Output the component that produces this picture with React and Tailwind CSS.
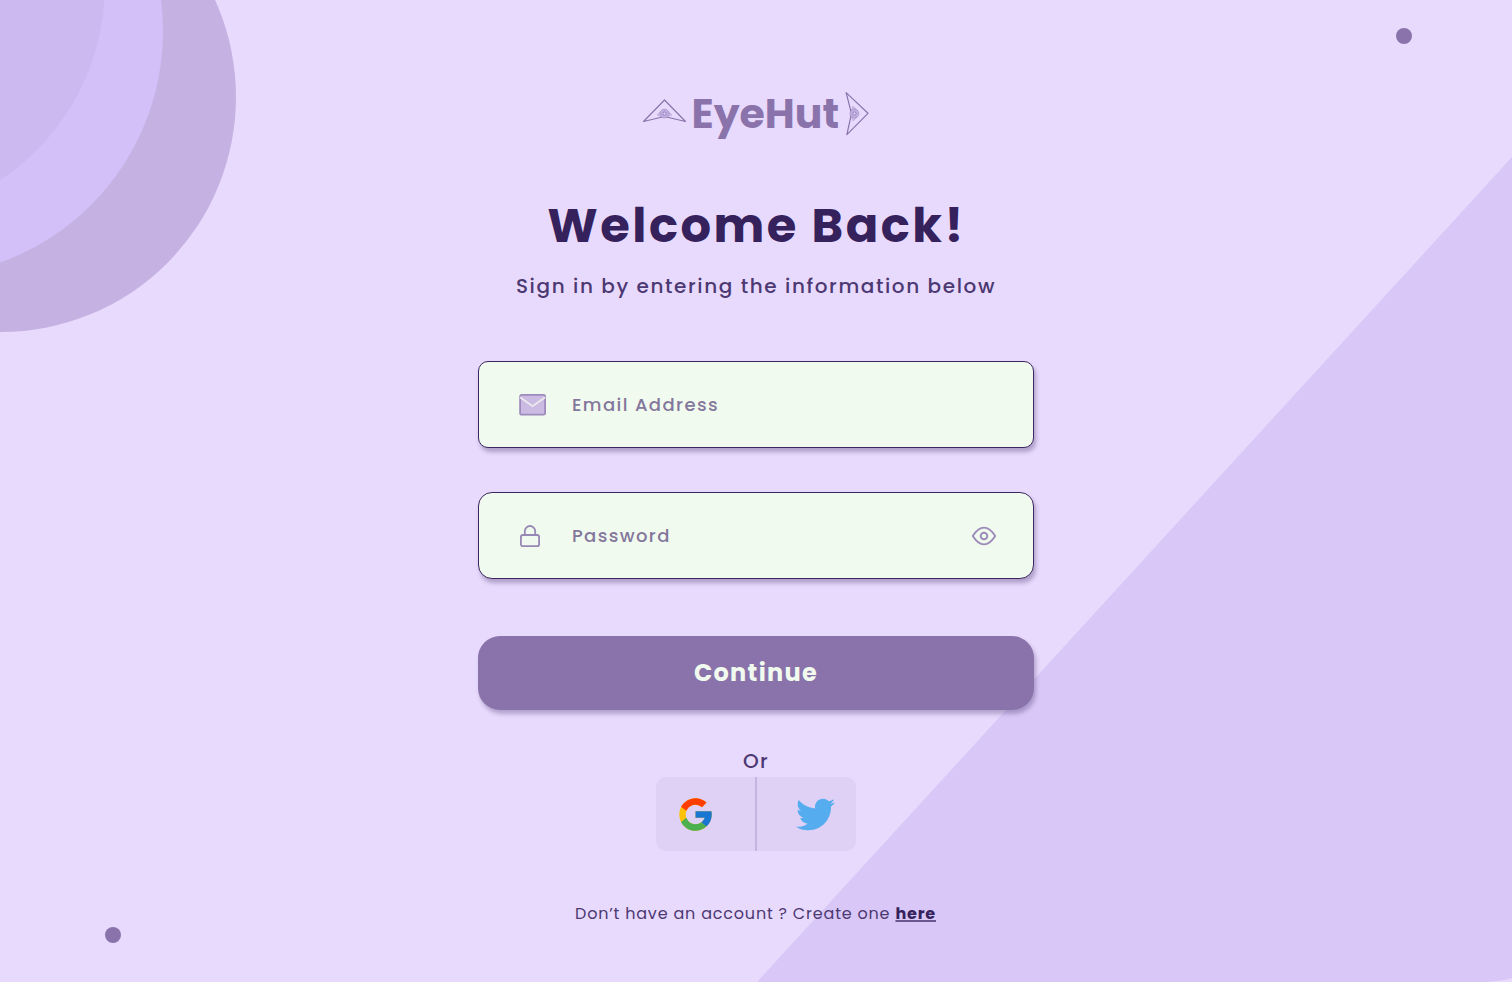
import { FcGoogle } from "react-icons/fc";
import { FaTwitter } from "react-icons/fa";

function Backdrop() {
  return (
    <svg className="absolute inset-0" width="1512" height="982" viewBox="0 0 1512 982" aria-hidden="true">
      <path d="M1512 157 757 982h755z" fill="#d9c8f7" />
      <path d="M1485 982q18-1 27-4v4z" fill="#e8dafd" />
      <circle cx="1" cy="97" r="235" fill="#c5b2e2" />
      <circle cx="-83" cy="31" r="246" fill="#d4c0f8" />
      <circle cx="-129" cy="-15" r="234" fill="#ccb9ef" />
      <circle cx="1404" cy="36" r="8" fill="#8a73ab" />
      <circle cx="113" cy="935" r="8" fill="#8a73ab" />
    </svg>
  );
}

function HutMark({ className }) {
  return (
    <svg className={className} width="44" height="24" viewBox="0 0 44 24" fill="none" stroke="#8a73ab">
      <path d="M1 22.5 22 1l21 21.5L22 17.5z" strokeWidth="1.2" strokeLinejoin="round" />
      <path d="M14.5 16q7.500-10 15 0-7.500 4-15 0z" fill="#cdbcea" strokeWidth=".5" strokeOpacity=".5" />
      <circle cx="22" cy="14.6" r="4.500" fill="#c1aee0" strokeWidth=".6" strokeOpacity=".6" />
      <circle cx="22" cy="14.6" r="1.700" fill="#d9c8f5" strokeWidth=".7" />
    </svg>
  );
}

function MailIcon() {
  return (
    <svg width="28" height="22" viewBox="0 0 28 22" fill="none">
      <rect x="1.1" y="0.9" width="25" height="19.800" rx="1.5" fill="#cbbbe2" stroke="#9e8bbd" strokeWidth="1.8" />
      <path d="M1 3.200 13.600 12.200 26.200 3.200" stroke="#ebe9ee" strokeWidth="1.8" />
    </svg>
  );
}

function LockIcon() {
  return (
    <svg width="22" height="24" viewBox="0 0 22 24" fill="none" stroke="#9888b5" strokeWidth="1.8">
      <rect x="1.9" y="11" width="18.2" height="11.2" rx="2" />
      <path d="M5.800 11V7.200a5.200 5.200 0 0 1 10.400 0V11" />
    </svg>
  );
}

function EyeIcon() {
  return (
    <svg width="26" height="20" viewBox="0 0 26 20" fill="none" stroke="#9b8bb9" strokeWidth="1.9">
      <path d="M1.800 10Q7 1.600 13 1.600T24.200 10Q19 18.400 13 18.400T1.800 10z" strokeLinejoin="round" />
      <circle cx="13" cy="10" r="3.3" />
    </svg>
  );
}

export default function App() {
  return (
    <div className="relative h-[982px] w-[1512px] overflow-hidden bg-[#e8dafd] font-['Poppins','Inter',sans-serif] text-[#35215c]">
      <Backdrop />
      <main className="relative mx-auto flex w-[556px] flex-col items-center whitespace-nowrap pt-[84px]">
        <div className="flex h-[60px] w-[228px] items-center">
          <HutMark className="shrink-0 translate-x-[0.5px] -translate-y-[3px]" />
          <span className="ml-[5.5px] w-[153px] text-[41px] font-bold leading-[60px] text-[#8a73ab]">EyeHut</span>
          <div className="flex h-11 w-6 shrink-0 items-center justify-center">
            <HutMark className="shrink-0 -translate-y-[0.5px] rotate-[89deg]" />
          </div>
        </div>
        <h1 className="mt-[44px] h-[75px] translate-x-[0.5px] text-5xl font-bold leading-[75px] tracking-[2.5px]">Welcome Back!</h1>
        <p className="mt-2 h-[30px] text-xl font-medium leading-[30px] tracking-[1.6px] text-[#4c3872]">
          Sign in by entering the information below
        </p>

        <label className="mt-[60px] flex h-[87px] w-full items-center rounded-[10px] border border-[#3b2661] bg-[#f1faee] pl-10 shadow-[2px_4px_4px_rgba(53,33,92,0.32)]">
          <MailIcon />
          <span className="ml-[25px] text-lg font-medium tracking-[1.4px] text-[#84779c]">Email Address</span>
        </label>
        <label className="mt-[44px] flex h-[87px] w-full items-center rounded-[14px] border border-[#3b2661] bg-[#f1faee] pl-10 pr-9 shadow-[2px_4px_4px_rgba(53,33,92,0.32)]">
          <LockIcon />
          <span className="ml-[31px] text-lg font-medium tracking-[1.4px] text-[#84779c]">Password</span>
          <span className="ml-auto"><EyeIcon /></span>
        </label>

        <button className="mt-[57px] h-[74px] w-full rounded-[22px] bg-[#8a73ab] text-2xl font-bold tracking-[1.3px] text-[#f1faee] shadow-[2px_4px_4px_rgba(53,33,92,0.3)]">
          Continue
        </button>

        <span className="mt-9 h-[31px] text-xl font-medium leading-[31px] tracking-[1.4px] text-[#4c3872]">Or</span>
        <div className="flex h-[74px] w-[200px] rounded-[10px] bg-[#dfd0f6]">
          <div className="flex w-[99px] items-center pl-[20px] pt-px">
            <FcGoogle size={39} />
          </div>
          <div className="w-0.5 bg-[#c5b3e0]" />
          <div className="flex w-[99px] items-center pl-[39px]">
            <FaTwitter size={39} color="#55acee" />
          </div>
        </div>

        <p className="mt-[51px] h-6 -translate-x-[0.5px] text-base leading-6 tracking-[0.8px] text-[#4c3872]">
          Don’t have an account ? Create one{" "}
          <a className="font-bold text-[#35215c] underline decoration-[#6b5790] decoration-[1.5px] underline-offset-1">here</a>
        </p>
      </main>
    </div>
  );
}
